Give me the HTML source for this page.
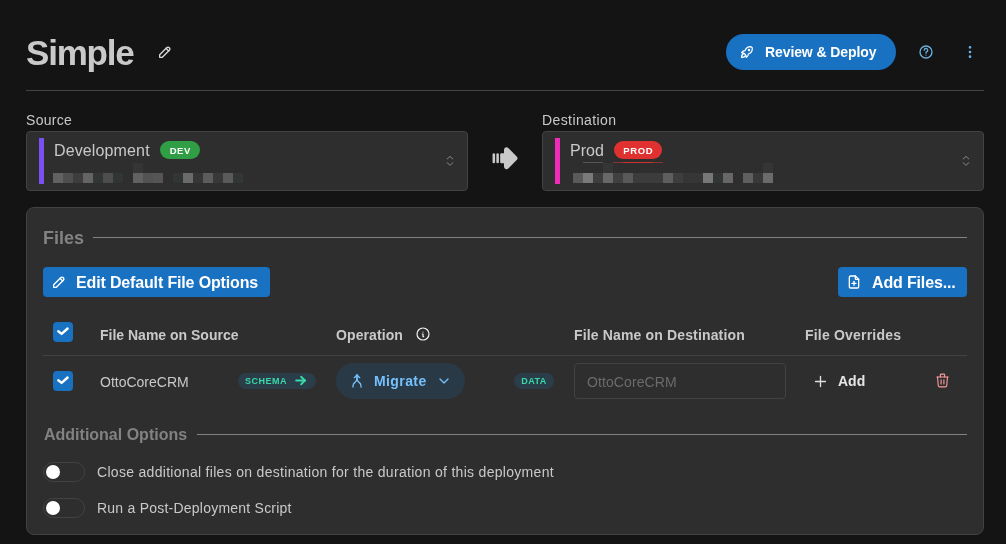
<!DOCTYPE html>
<html><head><meta charset="utf-8">
<style>
html,body{margin:0;padding:0;}
body{width:1006px;height:544px;overflow:hidden;background:#141414;position:relative;font-family:"Liberation Sans",sans-serif;color:#c9c9c9;}
.a{position:absolute;}
.t{position:absolute;white-space:nowrap;line-height:1;will-change:transform;}
.b{font-weight:700;}
svg{position:absolute;overflow:visible;}
.px{position:absolute;width:10px;height:10px;}
</style></head><body>

<!-- Header -->
<div class="t b" style="left:25.5px;top:35.2px;font-size:35px;color:#c9c9c9;letter-spacing:-1.2px;">Simple</div>
<svg style="left:157px;top:43.5px" width="16" height="16" viewBox="0 0 24 24" fill="none" stroke="#d9d9d9" stroke-width="2" stroke-linecap="round" stroke-linejoin="round"><path d="M4 20h4l10.5 -10.5a2.828 2.828 0 1 0 -4 -4l-10.5 10.5v4"/><path d="M13.5 6.5l4 4"/></svg>

<div class="a" style="left:726px;top:34px;width:170px;height:36px;border-radius:18px;background:#1971c2;"></div>
<svg style="left:739px;top:43.5px" width="16" height="16" viewBox="0 0 24 24" fill="none" stroke="#fff" stroke-width="1.9" stroke-linecap="round" stroke-linejoin="round"><path d="M4 13a8 8 0 0 1 7 7a6 6 0 0 0 3 -5a9 9 0 0 0 6 -8a3 3 0 0 0 -3 -3a9 9 0 0 0 -8 6a6 6 0 0 0 -5 3"/><path d="M7 14a6 6 0 0 0 -3 6a6 6 0 0 0 6 -3"/><path d="M15 9m-1 0a1 1 0 1 0 2 0a1 1 0 1 0 -2 0"/></svg>
<div class="t b" style="left:765px;top:45.2px;font-size:14px;color:#fff;letter-spacing:-0.1px;">Review &amp; Deploy</div>

<svg style="left:918px;top:44px" width="16" height="16" viewBox="0 0 24 24" fill="none" stroke="#6ab0dc" stroke-width="2" stroke-linecap="round" stroke-linejoin="round"><path d="M12 12m-9 0a9 9 0 1 0 18 0a9 9 0 1 0 -18 0"/><path d="M12 16.6v.01"/><path d="M9.4 9.3a2.6 2.6 0 1 1 3.9 2.25c-.8 .45 -1.3 .9 -1.3 1.75v.4"/></svg>
<svg style="left:962px;top:44px" width="16" height="16" viewBox="0 0 24 24" fill="none" stroke="#6cb4ec" stroke-width="2" stroke-linecap="round" stroke-linejoin="round"><path d="M12 12m-1 0a1 1 0 1 0 2 0a1 1 0 1 0 -2 0"/><path d="M12 19m-1 0a1 1 0 1 0 2 0a1 1 0 1 0 -2 0"/><path d="M12 5m-1 0a1 1 0 1 0 2 0a1 1 0 1 0 -2 0"/></svg>

<div class="a" style="left:26px;top:90px;width:958px;height:1px;background:#444;"></div>

<!-- Source / Destination -->
<div class="t" style="left:26px;top:112.9px;font-size:14px;letter-spacing:0.3px;">Source</div>
<div class="t" style="left:542px;top:112.9px;font-size:14px;letter-spacing:0.4px;">Destination</div>

<div class="a" style="left:26px;top:131px;width:440px;height:58px;border:1px solid #424242;border-radius:4px;background:#2e2e2e;"></div>
<div class="a" style="left:39px;top:138px;width:5px;height:46px;background:#7950f2;"></div>
<div class="t" style="left:54.1px;top:143.3px;font-size:16px;letter-spacing:0.13px;">Development</div>
<div class="a" style="left:160px;top:141px;width:40px;height:18px;border-radius:9px;background:#2f9e44;"></div>
<div class="t b" style="left:160px;top:145.7px;width:40px;text-align:center;font-size:9.5px;color:#fff;letter-spacing:0.6px;text-indent:0.6px;">DEV</div>
<svg style="left:442px;top:153px" width="16" height="16" viewBox="0 0 16 16" fill="none"><path d="M5.2 6L8 3.4 10.8 6M5.2 9.6L8 12.4 10.8 9.6" stroke="#8a8a8a" stroke-width="1" stroke-linecap="round" stroke-linejoin="round"/></svg>

<div class="a" style="left:542px;top:131px;width:440px;height:58px;border:1px solid #424242;border-radius:4px;background:#2e2e2e;"></div>
<div class="a" style="left:555px;top:138px;width:5px;height:46px;background:#f02bb9;"></div>
<div class="t" style="left:570px;top:143.1px;font-size:16px;">Prod</div>
<div class="a" style="left:614px;top:141px;width:48px;height:18px;border-radius:9px;background:#e03131;"></div>
<div class="t b" style="left:614px;top:145.7px;width:48px;text-align:center;font-size:9.5px;color:#fff;letter-spacing:0.6px;text-indent:0.6px;">PROD</div>
<svg style="left:958px;top:153px" width="16" height="16" viewBox="0 0 16 16" fill="none"><path d="M5.2 6L8 3.4 10.8 6M5.2 9.6L8 12.4 10.8 9.6" stroke="#8a8a8a" stroke-width="1" stroke-linecap="round" stroke-linejoin="round"/></svg>

<!-- pixelated blocks source -->
<div class="px" style="left:53px;top:173px;background:#616161"></div>
<div class="px" style="left:63px;top:173px;background:#4f4f4f"></div>
<div class="px" style="left:73px;top:173px;background:#3d3d3d"></div>
<div class="px" style="left:83px;top:173px;background:#646464"></div>
<div class="px" style="left:93px;top:173px;background:#323634"></div>
<div class="px" style="left:103px;top:173px;background:#4d4d4d"></div>
<div class="px" style="left:113px;top:173px;background:#313533"></div>
<div class="px" style="left:133px;top:173px;background:#616161"></div>
<div class="px" style="left:143px;top:173px;background:#525252"></div>
<div class="px" style="left:153px;top:173px;background:#555555"></div>
<div class="px" style="left:173px;top:173px;background:#313533"></div>
<div class="px" style="left:183px;top:173px;background:#6a6a6a"></div>
<div class="px" style="left:193px;top:173px;background:#363636"></div>
<div class="px" style="left:203px;top:173px;background:#5c5c5c"></div>
<div class="px" style="left:213px;top:173px;background:#383838"></div>
<div class="px" style="left:223px;top:173px;background:#5a5a5a"></div>
<div class="px" style="left:233px;top:173px;background:#323634"></div>
<div class="px" style="left:573px;top:173px;background:#5a5a5a"></div>
<div class="px" style="left:583px;top:173px;background:#7a7a7a"></div>
<div class="px" style="left:593px;top:173px;background:#3e3e3e"></div>
<div class="px" style="left:603px;top:173px;background:#686868"></div>
<div class="px" style="left:613px;top:173px;background:#404040"></div>
<div class="px" style="left:623px;top:173px;background:#595959"></div>
<div class="px" style="left:633px;top:173px;background:#3c3c3c"></div>
<div class="px" style="left:643px;top:173px;background:#3c3c3c"></div>
<div class="px" style="left:653px;top:173px;background:#3c3c3c"></div>
<div class="px" style="left:663px;top:173px;background:#5e5e5e"></div>
<div class="px" style="left:673px;top:173px;background:#3e3e3e"></div>
<div class="px" style="left:683px;top:173px;background:#363636"></div>
<div class="px" style="left:693px;top:173px;background:#363636"></div>
<div class="px" style="left:703px;top:173px;background:#777777"></div>
<div class="px" style="left:713px;top:173px;background:#323634"></div>
<div class="px" style="left:723px;top:173px;background:#676767"></div>
<div class="px" style="left:743px;top:173px;background:#5f5f5f"></div>
<div class="px" style="left:753px;top:173px;background:#393939"></div>
<div class="px" style="left:763px;top:173px;background:#6b6b6b"></div>
<div class="px" style="left:133px;top:163px;background:#353535"></div>
<div class="px" style="left:603px;top:163px;background:#353535"></div>
<div class="px" style="left:763px;top:163px;background:#353535"></div>
<div class="a" style="left:583px;top:162px;width:20px;height:1px;background:#555"></div>
<div class="a" style="left:613px;top:162px;width:50px;height:1px;background:#8a3535"></div>
<div class="a" style="left:623px;top:162px;width:30px;height:1px;background:#d03030"></div>

<!-- big arrow -->
<svg style="left:489.7px;top:142.6px" width="30.5" height="30.5" viewBox="0 0 24 24" fill="#c9c9c9"><path d="M12.089 3.634a2 2 0 0 0 -1.089 1.78l-.001 2.585h-1.999a1 1 0 0 0 -1 1v6l.007 .117a1 1 0 0 0 .993 .883l1.999 -.001l.001 2.587a2 2 0 0 0 3.414 1.414l6.586 -6.586a2 2 0 0 0 0 -2.828l-6.586 -6.586a2 2 0 0 0 -2.18 -.434l-.145 .068z"/><path d="M3 8a1 1 0 0 1 .993 .883l.007 .117v6a1 1 0 0 1 -1.993 .117l-.007 -.117v-6a1 1 0 0 1 1 -1z"/><path d="M6 8a1 1 0 0 1 .993 .883l.007 .117v6a1 1 0 0 1 -1.993 .117l-.007 -.117v-6a1 1 0 0 1 1 -1z"/></svg>

<!-- Card -->
<div class="a" style="left:26px;top:207px;width:956px;height:326px;border:1px solid #424242;border-radius:8px;background:#2e2e2e;"></div>
<div class="t b" style="left:43.1px;top:228.8px;font-size:18px;color:#828282;">Files</div>
<div class="a" style="left:93px;top:237px;width:874px;height:1px;background:#828282;"></div>

<div class="a" style="left:43px;top:267px;width:227px;height:30px;border-radius:4px;background:#1971c2;"></div>
<svg style="left:50.9px;top:274px" width="16" height="16" viewBox="0 0 24 24" fill="none" stroke="#fff" stroke-width="2" stroke-linecap="round" stroke-linejoin="round"><path d="M4 20h4l10.5 -10.5a2.828 2.828 0 1 0 -4 -4l-10.5 10.5v4"/><path d="M13.5 6.5l4 4"/></svg>
<div class="t b" style="left:76px;top:274.9px;font-size:16px;color:#fff;letter-spacing:-0.15px;">Edit Default File Options</div>

<div class="a" style="left:838px;top:267px;width:129px;height:30px;border-radius:4px;background:#1971c2;"></div>
<svg style="left:845.5px;top:273.6px" width="16" height="16" viewBox="0 0 24 24" fill="none" stroke="#fff" stroke-width="2" stroke-linecap="round" stroke-linejoin="round"><path d="M14 3v4a1 1 0 0 0 1 1h4"/><path d="M17 21h-10a2 2 0 0 1 -2 -2v-14a2 2 0 0 1 2 -2h7l5 5v11a2 2 0 0 1 -2 2z"/><path d="M12 11l0 6"/><path d="M9 14l6 0"/></svg>
<div class="t b" style="left:872px;top:274.9px;font-size:16px;color:#fff;letter-spacing:-0.15px;">Add Files...</div>

<!-- table header -->
<div class="a" style="left:53px;top:322px;width:20px;height:20px;border-radius:4px;background:#1971c2;"></div>
<svg style="left:53px;top:322px" width="20" height="20" viewBox="0 0 20 20" fill="none"><path d="M5.3 9.2L8.6 11.9 14.6 6.5" stroke="#fff" stroke-width="2.4" stroke-linecap="round" stroke-linejoin="round"/></svg>
<div class="t b" style="left:100px;top:328.2px;font-size:14px;">File Name on Source</div>
<div class="t b" style="left:336px;top:328.2px;font-size:14px;letter-spacing:0.1px;">Operation</div>
<svg style="left:415px;top:326px" width="16" height="16" viewBox="0 0 24 24" fill="none" stroke="#f2f2f2" stroke-width="1.8" stroke-linecap="round" stroke-linejoin="round"><path d="M3 12a9 9 0 1 0 18 0a9 9 0 0 0 -18 0"/><path d="M12 9h.01"/><path d="M11 12h1v4h1"/></svg>
<div class="t b" style="left:574px;top:328.2px;font-size:14px;letter-spacing:0.15px;">File Name on Destination</div>
<div class="t b" style="left:805px;top:328.2px;font-size:14px;letter-spacing:0.2px;">File Overrides</div>
<div class="a" style="left:43px;top:355px;width:924px;height:1px;background:#424242;"></div>

<!-- row -->
<div class="a" style="left:53px;top:371px;width:20px;height:20px;border-radius:4px;background:#1971c2;"></div>
<svg style="left:53px;top:371px" width="20" height="20" viewBox="0 0 20 20" fill="none"><path d="M5.3 9.2L8.6 11.9 14.6 6.5" stroke="#fff" stroke-width="2.4" stroke-linecap="round" stroke-linejoin="round"/></svg>
<div class="t" style="left:100px;top:375.4px;font-size:14px;">OttoCoreCRM</div>

<div class="a" style="left:238px;top:373px;width:78px;height:16px;border-radius:8px;background:#2c3d4a;"></div>
<div class="t b" style="left:245px;top:377px;font-size:9px;color:#38d9a9;letter-spacing:0.5px;">SCHEMA</div>
<svg style="left:293.3px;top:373px" width="15" height="15" viewBox="0 0 24 24" fill="none" stroke="#38d9a9" stroke-width="2.9" stroke-linecap="round" stroke-linejoin="round"><path d="M5 12l14 0"/><path d="M13 18l6 -6"/><path d="M13 6l6 6"/></svg>

<div class="a" style="left:336px;top:363px;width:129px;height:36px;border-radius:18px;background:#2a3946;"></div>
<svg style="left:349px;top:373px" width="16" height="16" viewBox="0 0 24 24" fill="none" stroke="#74c0fc" stroke-width="2" stroke-linecap="round" stroke-linejoin="round"><path d="M8 7l4 -4l4 4"/><path d="M12 3v5.394a6.737 6.737 0 0 1 -3 5.606a6.737 6.737 0 0 0 -3 5.606v1.394"/><path d="M12 3v5.394a6.737 6.737 0 0 0 3 5.606a6.737 6.737 0 0 1 3 5.606v1.394"/></svg>
<div class="t b" style="left:373.8px;top:374.2px;font-size:14px;color:#74c0fc;letter-spacing:0.4px;">Migrate</div>
<svg style="left:436px;top:373px" width="16" height="16" viewBox="0 0 24 24" fill="none" stroke="#74c0fc" stroke-width="2" stroke-linecap="round" stroke-linejoin="round"><path d="M6 9l6 6l6 -6"/></svg>

<div class="a" style="left:514px;top:373px;width:40px;height:16px;border-radius:8px;background:#2c3d4a;"></div>
<div class="t b" style="left:514px;top:377px;width:40px;text-align:center;font-size:9px;color:#38d9a9;letter-spacing:0.4px;">DATA</div>

<div class="a" style="left:574px;top:363px;width:210px;height:34px;border:1px solid #424242;border-radius:4px;background:#2e2e2e;"></div>
<div class="t" style="left:586.5px;top:375.4px;font-size:14px;color:#6b6b6b;letter-spacing:0.1px;">OttoCoreCRM</div>

<svg style="left:811.5px;top:372.5px" width="17" height="17" viewBox="0 0 24 24" fill="none" stroke="#e0e0e0" stroke-width="1.9" stroke-linecap="round" stroke-linejoin="round"><path d="M12 5l0 14"/><path d="M5 12l14 0"/></svg>
<div class="t b" style="left:838px;top:373.8px;font-size:14px;color:#e6e6e6;">Add</div>

<svg style="left:934.3px;top:372.3px" width="17" height="17" viewBox="0 0 24 24" fill="none" stroke="#ff9c9c" stroke-width="1.55" stroke-linecap="round" stroke-linejoin="round"><path d="M4 7l16 0"/><path d="M10 11l0 6"/><path d="M14 11l0 6"/><path d="M5 7l1 12a2 2 0 0 0 2 2h8a2 2 0 0 0 2 -2l1 -12"/><path d="M9 7v-3a1 1 0 0 1 1 -1h4a1 1 0 0 1 1 1v3"/></svg>

<!-- Additional options -->
<div class="t b" style="left:43.5px;top:427px;font-size:16px;color:#828282;">Additional Options</div>
<div class="a" style="left:197px;top:434px;width:770px;height:1px;background:#828282;"></div>

<div class="a" style="left:43px;top:462px;width:40px;height:18px;border:1px solid #424242;border-radius:10px;background:#2e2e2e;"></div>
<div class="a" style="left:46px;top:465px;width:14px;height:14px;border-radius:7px;background:#fff;"></div>
<div class="t" style="left:97px;top:465.1px;font-size:14px;letter-spacing:0.3px;">Close additional files on destination for the duration of this deployment</div>

<div class="a" style="left:43px;top:498px;width:40px;height:18px;border:1px solid #424242;border-radius:10px;background:#2e2e2e;"></div>
<div class="a" style="left:46px;top:501px;width:14px;height:14px;border-radius:7px;background:#fff;"></div>
<div class="t" style="left:97px;top:501.1px;font-size:14px;letter-spacing:0.23px;">Run a Post-Deployment Script</div>

</body></html>
